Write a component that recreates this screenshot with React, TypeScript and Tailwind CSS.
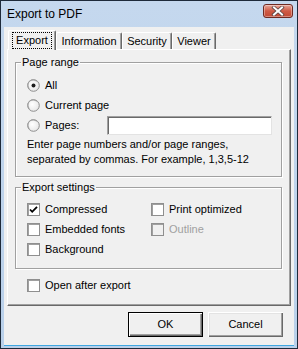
import { type FC, type ReactNode } from 'react';

const font = { fontFamily: '"Liberation Sans", Arial, sans-serif' };

const Radio: FC<{ checked?: boolean }> = ({ checked }) => (
  <svg width="13" height="13" viewBox="0 0 13 13" className="shrink-0">
    <defs>
      <radialGradient id="rg" cx="40%" cy="40%" r="70%">
        <stop offset="0%" stopColor="#ffffff" />
        <stop offset="100%" stopColor="#e4e4e4" />
      </radialGradient>
    </defs>
    <circle cx="6.5" cy="6.5" r="5.8" fill="url(#rg)" stroke="#8f8f8f" strokeWidth="1" />
    <path d="M2.3 9.5A5 5 0 0 1 9.5 2.3" fill="none" stroke="#a0a0a0" strokeWidth="1" />
    {checked && <circle cx="6.5" cy="6.5" r="2" fill="#1c1c1c" />}
  </svg>
);

const Check: FC<{ checked?: boolean; disabled?: boolean }> = ({ checked, disabled }) => (
  <span
    className={`w-[13px] h-[13px] shrink-0 border border-[#8f8f8f] shadow-[inset_1px_1px_0_#a0a0a0] flex items-center justify-center ${
      disabled ? 'bg-[#f0f0f0]' : 'bg-white'
    }`}
  >
    {checked && (
      <svg width="9" height="9" viewBox="0 0 9 9">
        <path d="M1 4.5l2.2 2.3L8 1.8" fill="none" stroke="#000" strokeWidth="1.8" />
      </svg>
    )}
  </span>
);

const Group: FC<{ label: string; className?: string; children: ReactNode }> = ({ label, className, children }) => (
  <div
    className={`relative w-[267px] border border-[#a0a0a0] shadow-[inset_1px_1px_0_#ffffff,1px_1px_0_#ffffff] ${className ?? ''}`}
  >
    <span className="absolute -top-[7px] left-[5px] px-[1px] bg-[#f0f0f0] leading-[13px]">{label}</span>
    {children}
  </div>
);

const Row: FC<{ children: ReactNode; className?: string }> = ({ children, className }) => (
  <div className={`h-[20px] flex items-center gap-[5px] ${className ?? ''}`}>{children}</div>
);

const Tab: FC<{ label: string; width: string; active?: boolean }> = ({ label, width, active }) =>
  active ? (
    <div
      className={`${width} h-[20px] -mb-px relative z-10 bg-[#f0f0f0] border-l border-t border-white border-r border-r-[#696969] rounded-t-[2px] flex items-start justify-center pt-[1px] shadow-[inset_-1px_0_0_#a0a0a0]`}
    >
      <span className="border border-dotted border-black px-[3px] leading-[15px]">{label}</span>
    </div>
  ) : (
    <div
      className={`${width} h-[17px] bg-[#f0f0f0] border-l border-t border-white border-r border-r-[#696969] rounded-t-[2px] flex items-start justify-center pt-[1px] shadow-[inset_-1px_0_0_#a0a0a0] leading-[14px]`}
    >
      {label}
    </div>
  );

const Button: FC<{ label: string; primary?: boolean }> = ({ label, primary }) => (
  <div
    className={`w-[75px] h-[25px] flex items-center justify-center bg-[#f0f0f0] ${
      primary
        ? 'border border-[#000] shadow-[inset_1px_1px_0_#ffffff,inset_-1px_-1px_0_#696969,inset_-2px_-2px_0_#a0a0a0]'
        : 'shadow-[inset_1px_1px_0_#ffffff,inset_-1px_-1px_0_#696969,inset_-2px_-2px_0_#a0a0a0,inset_2px_2px_0_#e3e3e3]'
    }`}
  >
    {label}
  </div>
);

export default function App() {
  return (
    <div
      className="w-[298px] h-[349px] border border-[#1e2a3a] bg-gradient-to-b from-[#c5d8ee] to-[#b9d0ea] flex flex-col text-[11px] text-black"
      style={font}
    >
      {/* Title bar */}
      <div className="h-[26px] flex items-start justify-between pl-[6px] pr-[4px]">
        <span className="text-[12px] leading-[16px] mt-[5px] text-black">Export to PDF</span>
        <div className="mt-[3px] w-[30px] h-[14px] rounded-[3px] border border-[#6e2a22] bg-gradient-to-b from-[#e7a699] via-[#cf5a45] to-[#c24a35] flex items-center justify-center shadow-[inset_0_0_0_1px_rgba(255,255,255,0.35)]">
          <svg width="14" height="10" viewBox="0 0 14 10">
            <path d="M3 1.5l8 7M11 1.5l-8 7" stroke="#5b4545" strokeWidth="3.6" strokeLinecap="square" />
            <path d="M3 1.5l8 7M11 1.5l-8 7" stroke="#ffffff" strokeWidth="2" strokeLinecap="square" />
          </svg>
        </div>
      </div>

      {/* Client area */}
      <div className="flex-1 mx-[3px] mb-[2px] bg-[#f0f0f0] border-b border-[#3fa7e0] flex flex-col pt-[2px] px-[3px]">
        <div className="flex items-end pl-[1px] h-[20px]">
          <Tab label="Export" width="w-[48px]" active />
          <Tab label="Information" width="w-[66px]" />
          <Tab label="Security" width="w-[50px]" />
          <Tab label="Viewer" width="w-[44px]" />
        </div>

        <div className="w-[284px] h-[257px] border-l border-t border-white border-r border-b border-r-[#696969] border-b-[#696969] shadow-[inset_-1px_-1px_0_#a0a0a0] pt-[12px] pl-[7px]">
          <Group label="Page range" className="h-[115px] pt-[12px] pl-[11px]">
            <Row>
              <Radio checked />
              <span>All</span>
            </Row>
            <Row>
              <Radio />
              <span>Current page</span>
            </Row>
            <Row>
              <Radio />
              <span className="w-[57px]">Pages:</span>
              <div className="w-[165px] h-[19px] bg-white border border-[#e3e3e3] border-t-[#a0a0a0] border-l-[#a0a0a0] shadow-[inset_1px_1px_0_#696969]" />
            </Row>
            <p className="mt-[2px] leading-[15px]">
              Enter page numbers and/or page ranges,
              <br />
              separated by commas. For example, 1,3,5-12
            </p>
          </Group>

          <Group label="Export settings" className="mt-[10px] h-[82px] pt-[11px] pl-[11px]">
            <div className="grid grid-cols-[124px_1fr]">
              <Row>
                <Check checked />
                <span>Compressed</span>
              </Row>
              <Row>
                <Check />
                <span>Print optimized</span>
              </Row>
              <Row>
                <Check />
                <span>Embedded fonts</span>
              </Row>
              <Row>
                <Check disabled />
                <span className="text-[#a0a0a0]">Outline</span>
              </Row>
              <Row>
                <Check />
                <span>Background</span>
              </Row>
            </div>
          </Group>

          <Row className="mt-[6px] pl-[12px]">
            <Check />
            <span>Open after export</span>
          </Row>
        </div>

        <div className="flex justify-end gap-[5px] mt-[6px] pr-[8px]">
          <Button label="OK" primary />
          <Button label="Cancel" />
        </div>
      </div>
    </div>
  );
}
